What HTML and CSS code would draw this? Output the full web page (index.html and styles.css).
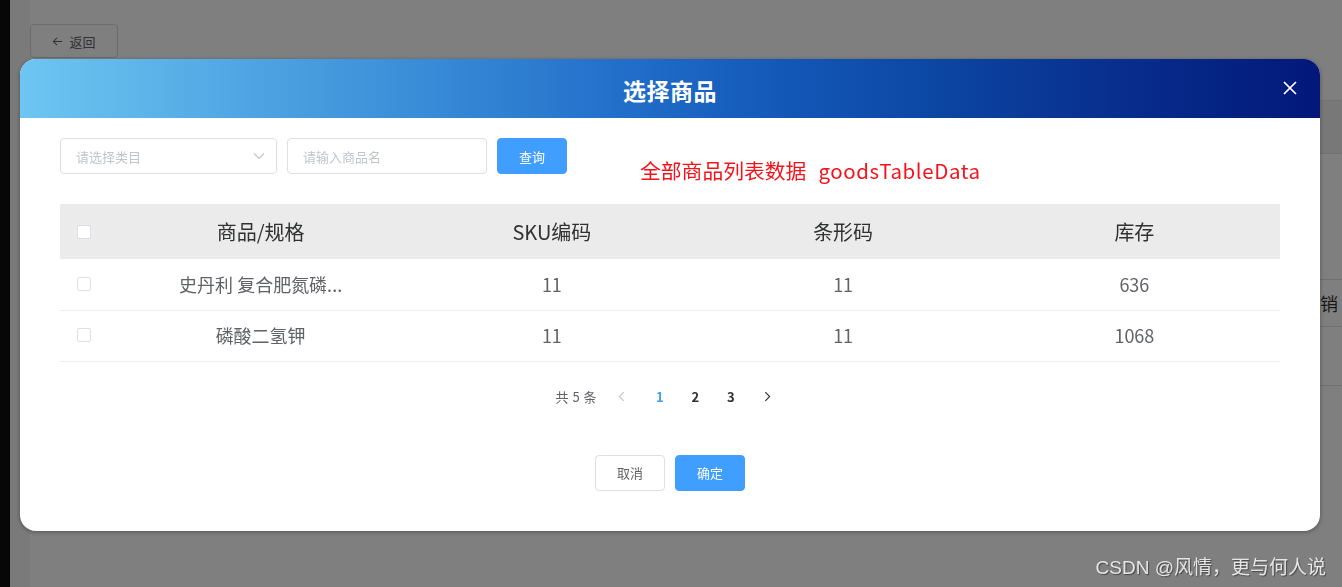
FILE: index.html
```html
<!DOCTYPE html>
<html lang="zh-CN">
<head>
<meta charset="utf-8">
<title>选择商品</title>
<link rel="stylesheet" href="styles.css">
</head>
<body>
<div class="page">
  <aside class="side"></aside>
  <div class="gutter"></div>
  <main class="main">
    <div class="topbar">
      <button class="back-btn">
        <svg class="back-ico" viewBox="0 0 12 12" width="11" height="11"><path d="M11 6H1.5M5.5 2L1.5 6l4 4" fill="none" stroke="currentColor" stroke-width="1.1"/></svg>
        <span>返回</span>
      </button>
    </div>
    <div class="bg-table">
      <div class="bg-row r1"></div>
      <div class="bg-row r2"></div>
      <div class="bg-row r3"><span class="bg-spacer"></span><span class="bg-cell">销</span></div>
      <div class="bg-row r4"></div>
    </div>
  </main>
</div>

<div class="mask"></div>

<div class="dialog">
  <div class="dialog-header">
    <span class="dialog-title">选择商品</span>
    <button class="dialog-close" aria-label="关闭">
      <svg viewBox="0 0 14 14" width="14" height="14"><path d="M1 1L13 13M13 1L1 13" stroke="#fff" stroke-width="1.7" fill="none"/></svg>
    </button>
  </div>
  <div class="dialog-body">
    <div class="filters">
      <div class="select">
        <span class="placeholder">请选择类目</span>
        <svg class="caret" viewBox="0 0 12 8" width="12" height="8"><path d="M1 1.5l5 5 5-5" fill="none" stroke="#c0c4cc" stroke-width="1.2"/></svg>
      </div>
      <div class="input"><span class="placeholder">请输入商品名</span></div>
      <button class="btn btn-primary">查询</button>
    </div>
    <div class="note"><span class="note-cn">全部商品列表数据</span><span class="note-en">goodsTableData</span></div>

    <table class="goods-table">
      <colgroup>
        <col class="col-check">
        <col><col><col><col>
      </colgroup>
      <thead>
        <tr>
          <th class="cell-check"><span class="checkbox"></span></th>
          <th>商品/规格</th>
          <th>SKU编码</th>
          <th>条形码</th>
          <th>库存</th>
        </tr>
      </thead>
      <tbody>
        <tr>
          <td class="cell-check"><span class="checkbox"></span></td>
          <td>史丹利 复合肥氮磷...</td>
          <td>11</td>
          <td>11</td>
          <td>636</td>
        </tr>
        <tr>
          <td class="cell-check"><span class="checkbox"></span></td>
          <td>磷酸二氢钾</td>
          <td>11</td>
          <td>11</td>
          <td>1068</td>
        </tr>
      </tbody>
    </table>

    <div class="pagination">
      <span class="total">共 5 条</span>
      <button class="pg-nav disabled" aria-label="上一页">
        <svg viewBox="0 0 8 12" width="7" height="11"><path d="M6.5 1L1.5 6l5 5" fill="none" stroke="currentColor" stroke-width="1.3"/></svg>
      </button>
      <ul class="pager">
        <li class="active">1</li>
        <li>2</li>
        <li>3</li>
      </ul>
      <button class="pg-nav" aria-label="下一页">
        <svg viewBox="0 0 8 12" width="7" height="11"><path d="M1.5 1l5 5-5 5" fill="none" stroke="currentColor" stroke-width="1.3"/></svg>
      </button>
    </div>

    <div class="footer">
      <button class="btn btn-default">取消</button>
      <button class="btn btn-primary">确定</button>
    </div>
  </div>
</div>

<div class="watermark">CSDN @风情，更与何人说</div>
</body>
</html>
```

FILE: styles.css
```css
* { box-sizing: border-box; }
html, body {
  margin: 0;
  height: 100%;
  overflow: hidden;
}
body {
  font-family: "Noto Sans CJK SC", "Noto Sans", "Liberation Sans", sans-serif;
  background: #fff;
  color: #303133;
}
button { font-family: inherit; cursor: pointer; }

/* background page */
.page {
  display: flex;
  height: 100%;
}
.side {
  width: 10px;
  background: #0e0e0e;
  flex: none;
}
.gutter {
  width: 20px;
  background: #f4f4f4;
  flex: none;
}
.main {
  flex: 1;
  min-width: 0;
  padding-top: 24px;
  overflow: hidden;
}
.topbar { height: 34px; }
.back-btn {
  width: 88px;
  height: 34px;
  border: 1px solid #d6d8dd;
  background: #fff;
  border-radius: 4px;
  color: #606266;
  font-size: 13px;
  display: flex;
  align-items: center;
  justify-content: center;
  gap: 6px;
  padding: 0;
}
.back-ico { margin-top: 1px; }
.bg-table { margin-top: 42px; }
.bg-row { border-top: 1px solid #e2e2e2; }
.r1 { height: 53px; background: #f0f0f0; }
.r2 { height: 126px; }
.r3 {
  height: 47px;
  display: grid;
  grid-template-columns: 1290px 40px;
  align-items: center;
}
.r4 { height: 60px; border-bottom: 1px solid #e2e2e2; }
.bg-cell { font-size: 18px; color: #333; white-space: nowrap; }

.mask {
  position: fixed;
  inset: 0;
  background: rgba(0, 0, 0, 0.5);
}

/* dialog */
.dialog {
  position: absolute;
  left: 20px;
  top: 59px;
  width: 1300px;
  background: #fff;
  border-radius: 16px;
  overflow: hidden;
  box-shadow: 0 1px 4px rgba(0, 0, 0, 0.35);
}
.dialog-header {
  position: relative;
  height: 59px;
  display: flex;
  align-items: center;
  justify-content: center;
  background: linear-gradient(to right, #6dc6f2 0%, #4ea4e2 18%, #3a8ed8 30%, #226fca 46%, #1459b8 58%, #0c47a4 70%, #082f8e 84%, #02187a 100%);
}
.dialog-title {
  color: #fff;
  font-size: 23px;
  font-weight: 700;
  letter-spacing: 0.5px;
  margin-top: 3px;
}
.dialog-close {
  position: absolute;
  right: 23px;
  top: 22px;
  width: 14px;
  height: 14px;
  padding: 0;
  border: 0;
  background: none;
  display: flex;
}

.dialog-body {
  position: relative;
  padding: 20px 40px 40px;
}
.filters {
  display: flex;
  gap: 10px;
  height: 36px;
}
.select, .input {
  height: 36px;
  border: 1px solid #dcdfe6;
  border-radius: 4px;
  display: flex;
  align-items: center;
  padding: 0 15px;
  font-size: 13px;
}
.select { width: 217px; justify-content: space-between; }
.input { width: 200px; }
.placeholder { color: #c0c4cc; }
.caret { margin-right: -4px; }

.btn {
  width: 70px;
  height: 36px;
  border-radius: 4px;
  font-size: 13px;
  padding: 0;
}
.btn-primary {
  background: #409eff;
  border: 1px solid #409eff;
  color: #fff;
}
.btn-default {
  background: #fff;
  border: 1px solid #dcdfe6;
  color: #606266;
}

.note {
  position: absolute;
  left: 620px;
  top: 38px;
  color: #f5121a;
  line-height: 28px;
  white-space: nowrap;
  display: flex;
  align-items: baseline;
  gap: 12px;
}
.note-cn { font-size: 20.8px; }
.note-en {
  font-size: 20.5px;
  letter-spacing: 0.6px;
}

.goods-table {
  width: 100%;
  margin-top: 30px;
  border-collapse: collapse;
  table-layout: fixed;
}
.col-check { width: 55px; }
.goods-table th {
  height: 55px;
  background: #ebebeb;
  font-size: 20px;
  font-weight: 400;
  color: #303133;
  text-align: center;
  padding: 0;
}
.goods-table td {
  height: 51px;
  border-bottom: 1px solid #ebeef5;
  font-size: 18px;
  color: #606266;
  text-align: center;
  padding: 0 0 1px;
}
.goods-table .cell-check {
  text-align: left;
  padding-left: 17px;
}
.checkbox {
  display: block;
  width: 14px;
  height: 14px;
  border: 1px solid #dcdfe6;
  border-radius: 2px;
  background: #fff;
}

.pagination {
  margin-top: 21px;
  height: 28px;
  display: flex;
  align-items: center;
  justify-content: center;
  font-size: 13px;
  color: #606266;
}
.total { margin-right: 7px; letter-spacing: 0.5px; }
.pg-nav {
  width: 34px;
  height: 28px;
  border: 0;
  background: none;
  color: #303133;
  display: flex;
  align-items: center;
  justify-content: center;
  padding: 0;
}
.pg-nav.disabled { color: #c0c4cc; }
.pager {
  list-style: none;
  margin: 0 2px 0 4px;
  padding: 0;
  display: flex;
}
.pager li {
  width: 35.5px;
  height: 28px;
  line-height: 28px;
  text-align: center;
  font-weight: 700;
  color: #303133;
}
.pager li.active { color: #409eff; }

.footer {
  margin-top: 44px;
  display: flex;
  justify-content: center;
  gap: 10px;
}

.watermark {
  position: absolute;
  right: 16px;
  bottom: 8px;
  font-family: "Liberation Sans", "Noto Sans CJK SC", sans-serif;
  font-size: 19px;
  color: #e6e6e6;
  text-shadow: 1px 1px 1px rgba(0, 0, 0, 0.45);
  white-space: nowrap;
}
```
